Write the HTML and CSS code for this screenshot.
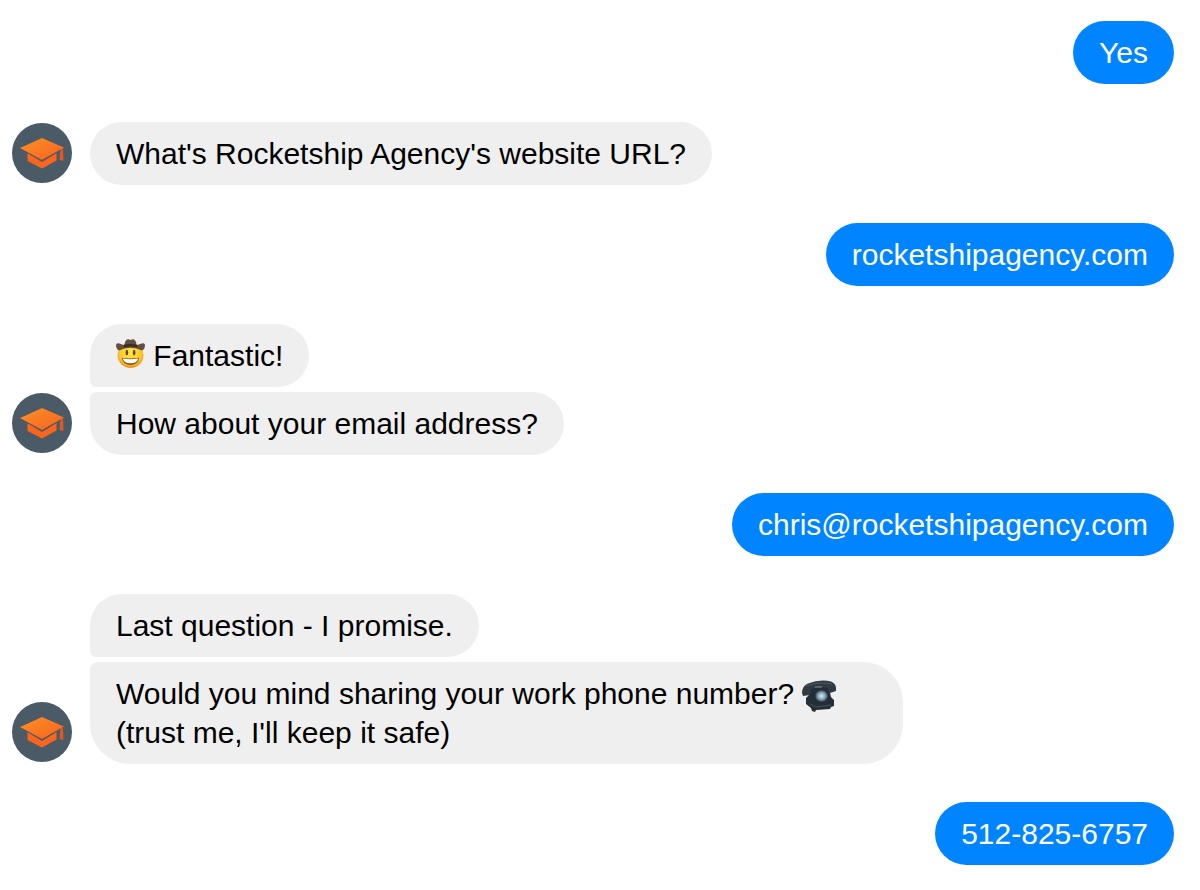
FILE: index.html
```html
<!DOCTYPE html>
<html lang="en">
<head>
  <title>Chat</title>
  <meta charset="UTF-8" />
  <meta name="viewport" content="width=device-width, initial-scale=1.0"/>
  <link rel="stylesheet" href="styles.css">
</head>
<body>
  <!-- shared avatar artwork -->
  <svg class="defs" width="0" height="0" aria-hidden="true">
    <defs>
      <linearGradient id="capFill" x1="0" y1="0" x2="1" y2="1">
        <stop offset="0" stop-color="#ff9226"/>
        <stop offset="1" stop-color="#f4601f"/>
      </linearGradient>
      <symbol id="cap" viewBox="0 0 60 60">
        <circle cx="30" cy="30" r="30" fill="#4a5a66"/>
        <path d="M15.500 30 L30 39 L44.500 30 V37.500 L30 45.500 L15.500 38 Z" fill="#f9651d"/>
        <path d="M7 25 L30 14.500 L53 24.500 L30 37.500 Z" fill="url(#capFill)" stroke="#4a5a66" stroke-width="1"/>
        <path d="M49 26 L51 25 L51.500 38 L47.500 37 L48 29 Z" fill="#e2571f"/>
      </symbol>
    </defs>
  </svg>

  <main class="chat">
    <div class="row sent">
      <p class="bubble">Yes</p>
    </div>

    <div class="row received">
      <svg class="avatar" role="img" aria-label="Graduation cap"><use href="#cap"/></svg>
      <div class="messages">
        <p class="bubble">What's Rocketship Agency's website URL?</p>
      </div>
    </div>

    <div class="row sent">
      <p class="bubble">rocketshipagency.com</p>
    </div>

    <div class="row received">
      <svg class="avatar" role="img" aria-label="Graduation cap"><use href="#cap"/></svg>
      <div class="messages">
        <p class="bubble">
          <svg class="emoji" viewBox="0 0 28 28" role="img" aria-label="Cowboy">
            <defs>
              <radialGradient id="face" cx="0.5" cy="0.4" r="0.6">
                <stop offset="0" stop-color="#ffe94a"/>
                <stop offset="0.7" stop-color="#fcc92c"/>
                <stop offset="1" stop-color="#e8931d"/>
              </radialGradient>
            </defs>
            <ellipse cx="14" cy="16" rx="12.500" ry="12" fill="url(#face)"/>
            <path d="M0 5.500 Q1 3.500 4 4.500 L8 6 Q9 0 12 0.300 L14 1 L16 0.300 Q19 0 20 6 L24 4.500 Q27 3.500 28 5.500 Q28 10 25 11 Q20 8.500 14 8.500 Q8 8.500 3 11 Q0 10 0 5.500 Z" fill="#65503f"/>
            <path d="M7.500 5.500 Q14 4 20.500 5.500 V8 Q14 6.500 7.500 8 Z" fill="#392a23"/>
            <ellipse cx="10.500" cy="13" rx="1.300" ry="2.700" fill="#70421b"/>
            <ellipse cx="17.500" cy="13" rx="1.300" ry="2.700" fill="#70421b"/>
            <path d="M5.500 18 Q14 19.500 22.500 18 Q21 25 14 25 Q7 25 5.500 18 Z" fill="#8a5220"/>
            <path d="M6.500 18.800 Q14 20.300 21.500 18.800 Q20 23.500 14 23.500 Q8 23.500 6.500 18.800 Z" fill="#fff"/>
          </svg>
          Fantastic!
        </p>
        <p class="bubble">How about your email address?</p>
      </div>
    </div>

    <div class="row sent">
      <p class="bubble">chris@rocketshipagency.com</p>
    </div>

    <div class="row received">
      <svg class="avatar" role="img" aria-label="Graduation cap"><use href="#cap"/></svg>
      <div class="messages">
        <p class="bubble">Last question - I promise.</p>
        <p class="bubble">
          Would you mind sharing your work phone number?
          <svg class="emoji phone" viewBox="0 0 34 32" role="img" aria-label="Telephone">
            <defs>
              <radialGradient id="dial">
                <stop offset="0" stop-color="#d5edfa"/>
                <stop offset="0.6" stop-color="#7f9fb4"/>
                <stop offset="1" stop-color="#2c3b46"/>
              </radialGradient>
            </defs>
            <path d="M7 6 L26 4 L29 17 L32 20 L32 26 L29 27 L28 29 L14 30 L13 32 L10 31 L9 28 L4 24 L4 18 L7 15 Z" fill="#242e36"/>
            <path d="M0 13 Q0 6 6 3.500 Q18 -1 29 1.500 Q34 3.500 34 8 V11 L28 13 L26 8 Q17 6 9 9 L8 15 L1 16 Z" fill="#303b44"/>
            <path d="M4 6 Q17 1 30 4" fill="none" stroke="#4c5963" stroke-width="1"/>
            <path d="M13 7 H20" fill="none" stroke="#83909a" stroke-width="1"/>
            <path d="M8 24 L14 27 L29 25" fill="none" stroke="#46535d" stroke-width="1"/>
            <ellipse cx="19.500" cy="16" rx="6.500" ry="6" fill="url(#dial)"/>
          </svg>
          (trust me, I'll keep it safe)
        </p>
      </div>
    </div>

    <div class="row sent">
      <p class="bubble">512-825-6757</p>
    </div>
  </main>
</body>
</html>
```

FILE: styles.css
```css
:root {
  --sent: #0084ff;
  --received: #efefef;
}
* {
  box-sizing: border-box;
}
body {
  margin: 0;
  background: #fff;
  color: #000;
  font-family: "Liberation Sans", Arial, sans-serif;
  font-size: 30px;
  line-height: 39px;
}
.defs {
  position: absolute;
}
.chat {
  display: flex;
  flex-direction: column;
  gap: 38px;
  padding: 21px 26px 24px 12px;
}
.row {
  display: flex;
}
.sent {
  justify-content: flex-end;
}
.received {
  align-items: flex-end;
  gap: 18px;
}
.avatar {
  width: 60px;
  height: 60px;
  margin-bottom: 2px;
  flex-shrink: 0;
}
.messages {
  flex: 1;
  display: flex;
  flex-direction: column;
  align-items: flex-start;
  gap: 5px;
}
.bubble {
  margin: 0;
  padding: 12px 26px;
  max-width: 75%;
  border-radius: 40px;
  background: var(--received);
}
.sent .bubble {
  background: var(--sent);
  color: #fff;
}
/* stacked bubbles are squared off where they meet */
.messages .bubble:not(:last-child) {
  border-bottom-left-radius: 8px;
}
.messages .bubble:not(:first-child) {
  border-top-left-radius: 8px;
}
.emoji {
  width: 29px;
  height: 29px;
  vertical-align: -2px;
}
.phone {
  width: 34px;
  height: 32px;
  vertical-align: -8px;
}
```
